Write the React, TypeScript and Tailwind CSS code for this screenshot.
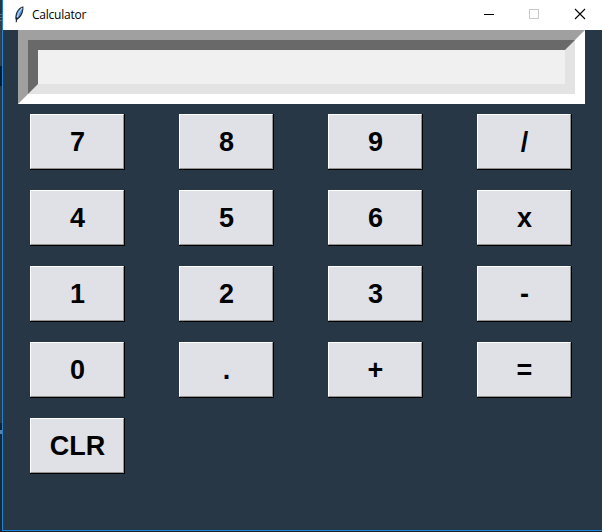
const keys: string[] = ['7', '8', '9', '/', '4', '5', '6', 'x', '1', '2', '3', '-', '0', '.', '+', '=', 'CLR'];

function FeatherIcon() {
  return (
    <svg width="12" height="18" viewBox="0 0 12 18" className="shrink-0">
      <path d="M2.4 13.5 C2 9.5 3 5.5 5.6 3 C7.2 1.2 8.6 .3 10.4 .4 C10.8 4 9.6 8.4 7 11.4 L4 14 Z" fill="#18202c" />
      <path d="M3.6 10.5 C3.6 7.5 4.6 5 6.6 3.4 L9.6 1.4 C9.6 4.8 8.2 8.2 6 10.8 L4.2 12.4 Z" fill="#4f8fdc" />
      <path d="M9 1.8 C6.8 4.6 5 7.6 4.2 11" stroke="#b5d4f4" strokeWidth="1.3" fill="none" />
      <path d="M3.7 12 L3.2 16.3" stroke="#182231" strokeWidth="1.1" fill="none" />
    </svg>
  );
}

function TitleBar() {
  return (
    <header className="flex h-[30px] items-center bg-white pl-2.5 font-['Open_Sans','Noto_Sans',sans-serif]">
      <FeatherIcon />
      <span className="ml-[7px] flex-1 text-[12px] leading-4 tracking-[-0.22px] text-black">Calculator</span>
      <div className="flex h-full pr-4">
        <svg width="108" height="30" viewBox="0 0 108 30" shapeRendering="crispEdges">
          <rect x="6" y="14" width="10" height="1" fill="#000" />
          <rect x="51.5" y="9.5" width="9" height="9" fill="none" stroke="#c9c9c9" />
          <path d="M97 9 l10 10 M107 9 l-10 10" stroke="#000" strokeWidth="1.1" fill="none" shapeRendering="geometricPrecision" />
        </svg>
      </div>
    </header>
  );
}

function Key({ label }: { label: string }) {
  return (
    <button className="h-14 w-[95px] border-r border-b border-black">
      <span className="flex h-full w-full items-center justify-center border border-t-white border-r-[#929292] border-b-[#929292] border-l-white bg-[#dfe1e6] pt-px pl-px text-[27px] leading-8 font-bold text-black">
        {label}
      </span>
    </button>
  );
}

export default function App() {
  return (
    <div className="flex h-[532px] w-[602px] overflow-hidden bg-[#1c252f]">
      <div className="flex w-[2px] flex-col">
        <div className="h-[14px] bg-[#2c343d]" />
        <div className="h-px bg-[#6b7178]" />
        <div className="h-[2px] bg-[#2c343d]" />
        <div className="h-px bg-[#6b7178]" />
        <div className="h-[2px] bg-[#2c343d]" />
        <div className="h-px bg-[#6b7178]" />
        <div className="h-[45px] bg-[#3a3c3e]" />
        <div className="h-5 bg-[#071c30]" />
        <div className="h-[337px] bg-[#343638]" />
        <div className="h-[7px] bg-[#1c2128]" />
        <div className="h-1 bg-[#62809b]" />
        <div className="flex-1 bg-[#20262d]" />
      </div>
      <div className="flex h-[531px] w-[600px] flex-col border-b border-l border-[#1883d7] bg-[#283745] font-['Liberation_Sans',Arial,sans-serif]">
        <TitleBar />
        <div className="ml-[15px] h-[74px] w-[567px] border-[10px] border-t-[#a0a0a0] border-r-white border-b-white border-l-[#a0a0a0]">
          <input
            readOnly
            aria-label="Display"
            className="block h-full w-full border-[10px] border-t-[#696969] border-r-[#e3e3e3] border-b-[#e3e3e3] border-l-[#696969] bg-[#f0f0f0] outline-none"
          />
        </div>
        <main className="ml-[27px] mt-2.5 grid w-[542px] grid-cols-[repeat(4,95px)] gap-x-[54px] gap-y-5">
          {keys.map((label) => (
            <Key key={label} label={label} />
          ))}
        </main>
      </div>
    </div>
  );
}
